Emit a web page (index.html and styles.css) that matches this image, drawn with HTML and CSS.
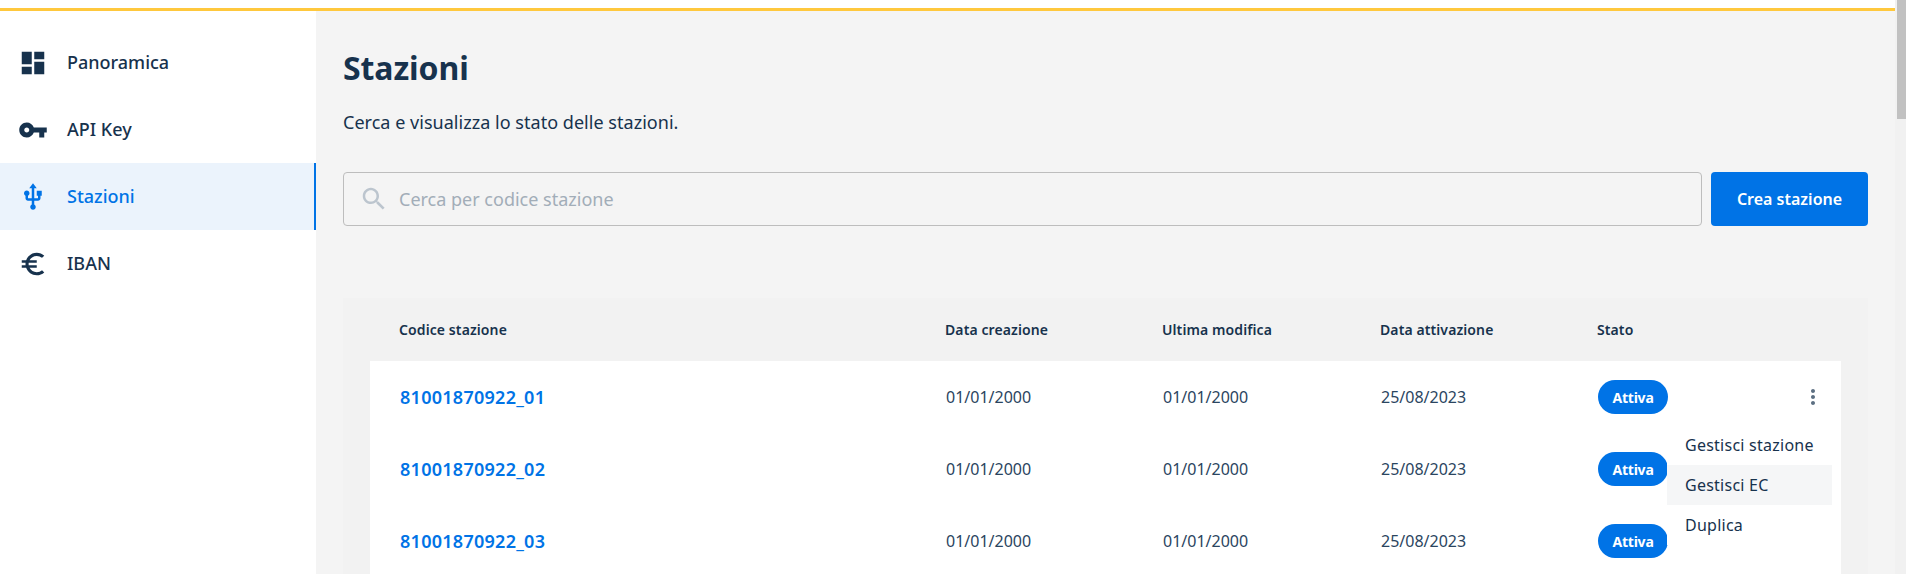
FILE: index.html
```html
<!DOCTYPE html>
<html lang="it">
<head>
<meta charset="utf-8">
<title>Stazioni</title>
<link rel="stylesheet" href="styles.css">
</head>
<body>
<div class="viewport">
  <div class="page">
    <div class="topbar"></div>
    <div class="shell">
      <nav class="sidebar">
        <a class="nav-item"><svg class="nav-icon" viewBox="0 0 24 24"><path d="M3 13h8V3H3v10zm0 8h8v-6H3v6zm10 0h8V11h-8v10zm0-18v6h8V3h-8z"/></svg><span class="nav-label">Panoramica</span></a>
        <a class="nav-item"><svg class="nav-icon" viewBox="0 0 24 24"><path d="M12.65 10C11.83 7.67 9.61 6 7 6c-3.31 0-6 2.69-6 6s2.69 6 6 6c2.61 0 4.83-1.67 5.65-4H17v4h4v-4h2v-4H12.65zM7 14c-1.1 0-2-.9-2-2s.9-2 2-2 2 .9 2 2-.9 2-2 2z"/></svg><span class="nav-label">API Key</span></a>
        <a class="nav-item active"><svg class="nav-icon" viewBox="0 0 24 24"><path d="M15 7v4h1v2h-3V5h2l-3-4-3 4h2v8H8v-2.07c.7-.37 1.2-1.08 1.2-1.93 0-1.21-.99-2.2-2.2-2.2-1.21 0-2.2.99-2.2 2.2 0 .85.5 1.56 1.2 1.93V13c0 1.11.89 2 2 2h3v3.05c-.71.37-1.2 1.1-1.2 1.95 0 1.22.99 2.2 2.2 2.2 1.21 0 2.2-.98 2.2-2.2 0-.85-.49-1.58-1.2-1.95V15h3c1.11 0 2-.89 2-2v-2h1V7h-4z"/></svg><span class="nav-label">Stazioni</span></a>
        <a class="nav-item"><svg class="nav-icon" viewBox="0 0 24 24"><path d="M15 18.5c-2.51 0-4.68-1.42-5.76-3.5H15v-2H8.58c-.05-.33-.08-.66-.08-1s.03-.67.08-1H15V9H9.24C10.32 6.92 12.5 5.5 15 5.5c1.61 0 3.09.59 4.23 1.57L21 5.3C19.41 3.87 17.3 3 15 3c-3.92 0-7.24 2.51-8.48 6H3v2h3.06c-.04.33-.06.66-.06 1s.02.67.06 1H3v2h3.52c1.24 3.49 4.56 6 8.48 6 2.31 0 4.41-.87 6-2.3l-1.78-1.77c-1.13.98-2.6 1.57-4.22 1.57z"/></svg><span class="nav-label">IBAN</span></a>
      </nav>
      <main class="content">
        <h1 class="title">Stazioni</h1>
        <p class="subtitle">Cerca e visualizza lo stato delle stazioni.</p>
        <div class="toolbar">
          <div class="search">
            <svg class="search-icon" viewBox="0 0 24 24"><path d="M15.5 14h-.79l-.28-.27C15.41 12.59 16 11.11 16 9.5 16 5.91 13.09 3 9.5 3S3 5.91 3 9.5 5.91 16 9.5 16c1.61 0 3.09-.59 4.23-1.57l.27.28v.79l5 4.99L20.49 19l-4.99-5zm-6 0C7.01 14 5 11.99 5 9.5S7.01 5 9.5 5 14 7.01 14 9.5 11.99 14 9.5 14z"/></svg>
            <span>Cerca per codice stazione</span>
          </div>
          <button class="btn-primary">Crea stazione</button>
        </div>
        <section class="table">
          <div class="table-head">
            <div>Codice stazione</div><div>Data creazione</div><div>Ultima modifica</div><div>Data attivazione</div><div>Stato</div>
          </div>
          <div class="table-body">
            <div class="row">
              <a class="code">81001870922_01</a><div>01/01/2000</div><div>01/01/2000</div><div>25/08/2023</div><div><span class="badge">Attiva</span></div>
              <svg class="more" viewBox="0 0 24 24"><path d="M12 8c1.1 0 2-.9 2-2s-.9-2-2-2-2 .9-2 2 .9 2 2 2zm0 2c-1.1 0-2 .9-2 2s.9 2 2 2 2-.9 2-2-.9-2-2-2zm0 6c-1.1 0-2 .9-2 2s.9 2 2 2 2-.9 2-2-.9-2-2-2z"/></svg>
            </div>
            <div class="row">
              <a class="code">81001870922_02</a><div>01/01/2000</div><div>01/01/2000</div><div>25/08/2023</div><div><span class="badge">Attiva</span></div>
            </div>
            <div class="row">
              <a class="code">81001870922_03</a><div>01/01/2000</div><div>01/01/2000</div><div>25/08/2023</div><div><span class="badge">Attiva</span></div>
            </div>
            <ul class="menu">
              <li>Gestisci stazione</li>
              <li class="hover">Gestisci EC</li>
              <li>Duplica</li>
            </ul>
          </div>
        </section>
      </main>
    </div>
  </div>
  <div class="scrollbar"><div class="thumb"></div></div>
</div>
</body>
</html>
```
FILE: styles.css
```css
* { box-sizing: border-box; }
html, body { margin: 0; height: 100%; overflow: hidden; }
body { font-family: "Noto Sans", "Open Sans", sans-serif; color: #17324d; background: #fff; }
.viewport { display: flex; height: 574px; overflow: hidden; }
.page { flex: 1; min-width: 0; display: flex; flex-direction: column; }
.topbar { height: 11px; flex: none; background: #fff; border-bottom: 3px solid #ffc83d; }
.shell { flex: 1; display: flex; min-height: 0; }
.scrollbar { width: 11px; flex: none; background: #f1f1f1; padding-left: 2px; }
.thumb { height: 119px; background: #c1c1c1; }

.sidebar { width: 316px; flex: none; background: #fff; padding-top: 18px; }
.nav-item { display: flex; align-items: center; gap: 19px; height: 67px; padding-left: 18px; font-size: 18px; font-weight: 500; color: #17324d; }
.nav-label { margin-bottom: 2px; }
.nav-item.active { background: #ebf3fc; color: #0073e6; border-right: 2px solid #0073e6; }
.nav-icon { width: 30px; height: 30px; flex: none; fill: currentColor; }

.content { flex: 1; min-width: 0; background: #f4f4f4; padding: 0 27px; overflow: hidden; }
.title { margin: 33px 0 0; font-size: 32px; line-height: 48px; font-weight: 700; letter-spacing: -0.1px; }
.subtitle { margin: 18px 0 0; font-size: 18px; line-height: 24px; letter-spacing: 0.03px; }
.toolbar { display: flex; gap: 9px; margin-top: 38px; }
.search { flex: 1; height: 54px; display: flex; align-items: center; gap: 10px; padding-left: 15px; border: 1px solid #bdbdbd; border-radius: 4px; color: #a2adb8; font-size: 18px; }
.search-icon { width: 30px; height: 30px; fill: #bcc5ce; flex: none; }
.btn-primary { width: 157px; height: 54px; border: 0; border-radius: 4px; background: #0073e6; color: #fff; font: 600 16px "Noto Sans", sans-serif; }

.table { margin-top: 72px; background: #f2f2f2; padding: 0 27px; }
.table-head, .row { display: grid; grid-template-columns: 546px 217px 218px 217px 1fr; align-items: center; }
.table-head { height: 63px; padding-left: 29px; font-size: 14px; font-weight: 600; letter-spacing: 0.1px; }
.table-body { position: relative; background: #fff; height: 216px; }
.row { height: 72px; padding-left: 30px; font-size: 16px; color: #2b4560; position: relative; }
.code { font-size: 18px; font-weight: 600; color: #0073e6; letter-spacing: 0.27px; }
.badge { display: inline-flex; align-items: center; justify-content: center; width: 70px; height: 34px; border-radius: 17px; background: #0073e6; color: #fff; font-size: 14px; font-weight: 700; letter-spacing: -0.2px; }
.more { position: absolute; right: 16px; top: 24px; width: 24px; height: 24px; fill: #5c6f82; }
.menu { position: absolute; left: 1297px; top: 64px; width: 165px; margin: 0; padding: 0; list-style: none; background: #fff; font-size: 16px; letter-spacing: 0.25px; }
.menu li { height: 40px; line-height: 40px; padding-left: 18px; }
.menu li.hover { background: #f5f6f7; }
```
